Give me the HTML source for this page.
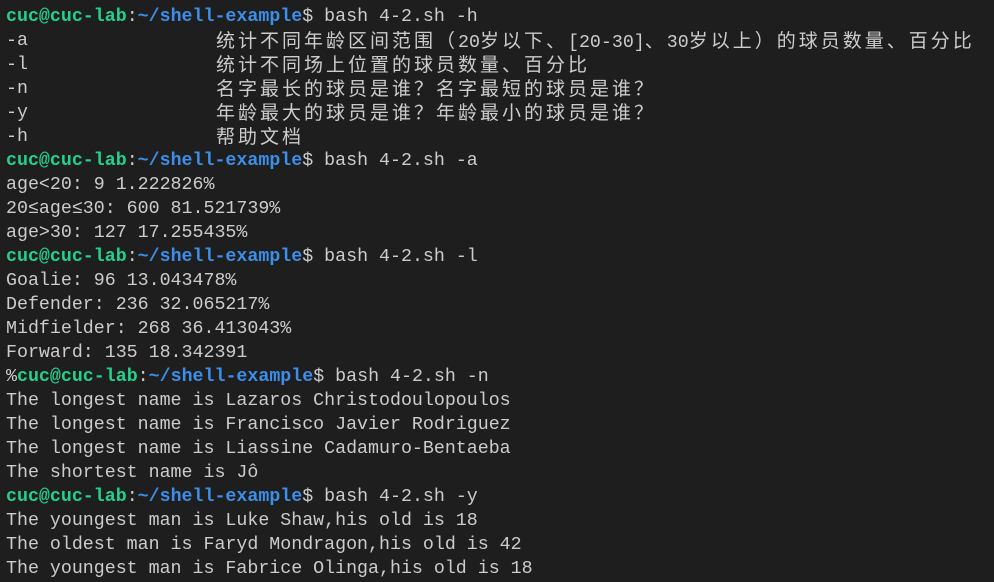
<!DOCTYPE html>
<html><head><meta charset="utf-8"><style>
html,body{margin:0;padding:0;background:#1e1e1e;width:994px;height:582px;overflow:hidden}
.t{position:absolute;left:6px;top:5px;font-family:"Liberation Mono","Noto Sans CJK SC",monospace;font-size:18.3px;color:#cccccc}
.l{height:24px;line-height:24px;position:relative;white-space:pre}
.g{color:#23d18b;font-weight:bold}
.b{color:#3b8eea;font-weight:bold}
.c{position:absolute;left:210px;top:-1px;font-size:19px;letter-spacing:3px;font-family:"Noto Sans CJK SC",sans-serif;line-height:24px}
.c i{font-style:normal;font-size:18.3px;letter-spacing:0;font-family:"Liberation Mono",monospace}
</style></head><body><div class="t"><div class="l"><span class="g">cuc@cuc-lab</span>:<span class="b">~/shell-example</span>$ bash 4-2.sh -h</div><div class="l">-a<span class="c">统计不同年龄区间范围（<i>20</i>岁以下、<i>[20-30]</i>、<i>30</i>岁以上）的球员数量、百分比</span></div><div class="l">-l<span class="c">统计不同场上位置的球员数量、百分比</span></div><div class="l">-n<span class="c">名字最长的球员是谁？名字最短的球员是谁？</span></div><div class="l">-y<span class="c">年龄最大的球员是谁？年龄最小的球员是谁？</span></div><div class="l">-h<span class="c">帮助文档</span></div><div class="l"><span class="g">cuc@cuc-lab</span>:<span class="b">~/shell-example</span>$ bash 4-2.sh -a</div><div class="l">age&lt;20: 9 1.222826%</div><div class="l">20≤age≤30: 600 81.521739%</div><div class="l">age&gt;30: 127 17.255435%</div><div class="l"><span class="g">cuc@cuc-lab</span>:<span class="b">~/shell-example</span>$ bash 4-2.sh -l</div><div class="l">Goalie: 96 13.043478%</div><div class="l">Defender: 236 32.065217%</div><div class="l">Midfielder: 268 36.413043%</div><div class="l">Forward: 135 18.342391</div><div class="l">%<span class="g">cuc@cuc-lab</span>:<span class="b">~/shell-example</span>$ bash 4-2.sh -n</div><div class="l">The longest name is Lazaros Christodoulopoulos</div><div class="l">The longest name is Francisco Javier Rodriguez</div><div class="l">The longest name is Liassine Cadamuro-Bentaeba</div><div class="l">The shortest name is Jô</div><div class="l"><span class="g">cuc@cuc-lab</span>:<span class="b">~/shell-example</span>$ bash 4-2.sh -y</div><div class="l">The youngest man is Luke Shaw,his old is 18</div><div class="l">The oldest man is Faryd Mondragon,his old is 42</div><div class="l">The youngest man is Fabrice Olinga,his old is 18</div></div></body></html>
